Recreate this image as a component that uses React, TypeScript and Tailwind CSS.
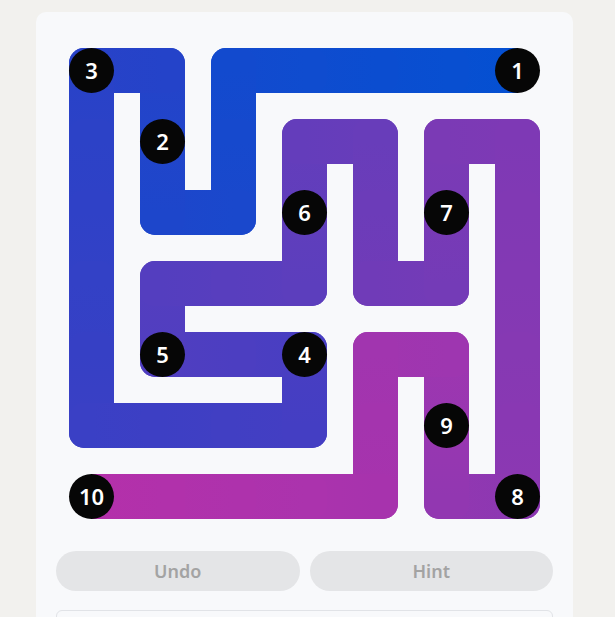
import React from "react";

const CELL = 71;
const HALF = 22.5;

// cell path from 1 to 10, [col, row]
const path: [number, number][] = [
  [6, 0], [5, 0], [4, 0], [3, 0], [2, 0], [2, 1], [2, 2], [1, 2], [1, 1], [1, 0],
  [0, 0], [0, 1], [0, 2], [0, 3], [0, 4], [0, 5], [1, 5], [2, 5], [3, 5], [3, 4],
  [2, 4], [1, 4], [1, 3], [2, 3], [3, 3], [3, 2], [3, 1], [4, 1], [4, 2], [4, 3],
  [5, 3], [5, 2], [5, 1], [6, 1], [6, 2], [6, 3], [6, 4], [6, 5], [6, 6], [5, 6],
  [5, 5], [5, 4], [4, 4], [4, 5], [4, 6], [3, 6], [2, 6], [1, 6], [0, 6],
];

const numbers: { n: number; c: number; r: number }[] = [
  { n: 1, c: 6, r: 0 },
  { n: 2, c: 1, r: 1 },
  { n: 3, c: 0, r: 0 },
  { n: 4, c: 3, r: 4 },
  { n: 5, c: 1, r: 4 },
  { n: 6, c: 3, r: 2 },
  { n: 7, c: 5, r: 2 },
  { n: 8, c: 6, r: 6 },
  { n: 9, c: 5, r: 5 },
  { n: 10, c: 0, r: 6 },
];

// colour stops along the path index
const stops: [number, [number, number, number]][] = [
  [0, [4, 80, 210]],
  [10, [40, 66, 200]],
  [19, [72, 62, 194]],
  [25, [96, 62, 188]],
  [31, [120, 58, 182]],
  [38, [140, 56, 178]],
  [41, [158, 54, 176]],
  [48, [180, 48, 170]],
];

function colorAt(i: number) {
  for (let k = 0; k < stops.length - 1; k++) {
    const [a, ca] = stops[k];
    const [b, cb] = stops[k + 1];
    if (i >= a && i <= b) {
      const t = (i - a) / (b - a);
      const m = ca.map((v, j) => Math.round(v + (cb[j] - v) * t));
      return `rgb(${m[0]},${m[1]},${m[2]})`;
    }
  }
  return "rgb(180,48,170)";
}

const cx = (c: number) => c * CELL + CELL / 2;

function Board() {
  const last = path.length - 2;
  return (
    <svg width={497} height={497} viewBox="0 0 497 497" className="block">
      <defs>
        {path.slice(0, -1).map((p, i) => {
          const q = path[i + 1];
          return (
            <linearGradient
              key={i}
              id={`seg${i}`}
              gradientUnits="userSpaceOnUse"
              x1={cx(p[0])}
              y1={cx(p[1])}
              x2={cx(q[0])}
              y2={cx(q[1])}
            >
              <stop offset="0" stopColor={colorAt(i)} />
              <stop offset="1" stopColor={colorAt(i + 1)} />
            </linearGradient>
          );
        })}
      </defs>
      {path.slice(0, -1).map((p, i) => {
        const q = path[i + 1];
        const x1 = cx(p[0]);
        const y1 = cx(p[1]);
        const x2 = cx(q[0]);
        const y2 = cx(q[1]);
        let left = Math.min(x1, x2) - HALF;
        let right = Math.max(x1, x2) + HALF;
        const top = Math.min(y1, y2) - HALF;
        const bottom = Math.max(y1, y2) + HALF;
        // path ends stop at the circle centre
        if (i === 0) {
          if (x1 > x2) right = x1;
          if (x1 < x2) left = x1;
        }
        if (i === last) {
          if (x2 < x1) left = x2;
          if (x2 > x1) right = x2;
        }
        return (
          <rect
            key={i}
            x={left}
            y={top}
            width={right - left}
            height={bottom - top}
            rx={i === 0 || i === last ? 0 : 15}
            fill={`url(#seg${i})`}
          />
        );
      })}
      {numbers.map((d) => (
        <g key={d.n}>
          <circle cx={cx(d.c)} cy={cx(d.r)} r={22.5} fill="#060606" />
          <text
            x={cx(d.c)}
            y={cx(d.r) + 8}
            textAnchor="middle"
            fill="#ffffff"
            fontSize={22}
            fontWeight={600}
            fontFamily="'Noto Sans', 'Open Sans', sans-serif"
          >
            {d.n}
          </text>
        </g>
      ))}
    </svg>
  );
}

export default function App() {
  return (
    <div className="min-h-screen bg-[#f2f1ee] pt-3 font-['Noto_Sans',sans-serif]">
      <div className="ml-[36px] w-[537px] rounded-[10px] bg-[#f8f9fb] px-5 pt-[23px] pb-5">
        <Board />
        <div className="mt-[19px] flex gap-[10px]">
          <button className="h-10 flex-1 rounded-full bg-[#e4e5e7] text-[18px] font-semibold text-[#a3a3a3]">
            Undo
          </button>
          <button className="h-10 flex-1 rounded-full bg-[#e4e5e7] text-[18px] font-semibold text-[#a3a3a3]">
            Hint
          </button>
        </div>
        <div className="mt-[19px] h-24 rounded-md border border-[#e1e3e7] bg-[#f8f9fb]"></div>
      </div>
    </div>
  );
}
